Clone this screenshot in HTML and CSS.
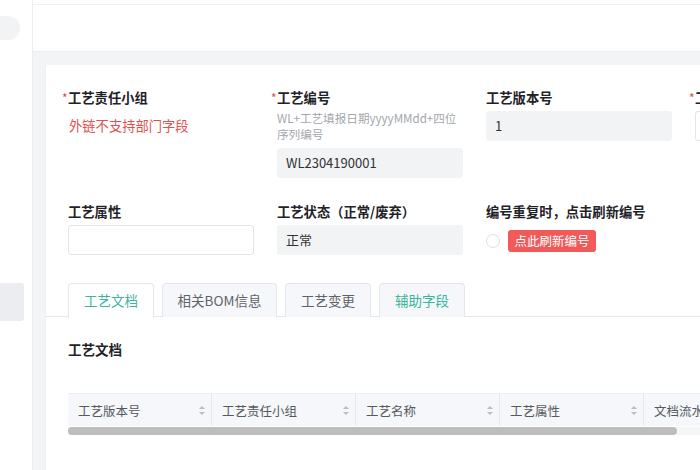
FILE: index.html
```html
<!DOCTYPE html>
<html lang="zh">
<head>
<meta charset="utf-8">
<link rel="stylesheet" href="styles.css">
</head>
<body>
<div class="app">
  <aside class="sidebar">
    <div class="side-pill"></div>
    <div class="side-active"></div>
  </aside>
  <main class="main">
    <header class="topbar"></header>
    <section class="content">
      <div class="card">
        <div class="form-grid">
          <div class="field">
            <div class="label req">工艺责任小组</div>
            <div class="warn">外链不支持部门字段</div>
          </div>
          <div class="field">
            <div class="label req">工艺编号</div>
            <div class="hint">WL+工艺填报日期yyyyMMdd+四位序列编号</div>
            <div class="input disabled">WL2304190001</div>
          </div>
          <div class="field">
            <div class="label">工艺版本号</div>
            <div class="input disabled">1</div>
          </div>
          <div class="field">
            <div class="label req">工艺名称</div>
            <div class="input"></div>
          </div>

          <div class="field">
            <div class="label">工艺属性</div>
            <div class="input"></div>
          </div>
          <div class="field">
            <div class="label">工艺状态（正常/废弃）</div>
            <div class="input disabled">正常</div>
          </div>
          <div class="field">
            <div class="label">编号重复时，点击刷新编号</div>
            <div class="refresh">
              <span class="radio"></span>
              <span class="btn-red">点此刷新编号</span>
            </div>
          </div>
          <div class="field"></div>
        </div>

        <div class="tabs">
          <div class="tab active">工艺文档</div>
          <div class="tab wide">相关BOM信息</div>
          <div class="tab">工艺变更</div>
          <div class="tab teal">辅助字段</div>
        </div>

        <h3 class="section-title">工艺文档</h3>

        <div class="table">
          <div class="thead">
            <div class="th"><span>工艺版本号</span><i class="sort"></i></div>
            <div class="th"><span>工艺责任小组</span><i class="sort"></i></div>
            <div class="th"><span>工艺名称</span><i class="sort"></i></div>
            <div class="th"><span>工艺属性</span><i class="sort"></i></div>
            <div class="th"><span>文档流水号</span><i class="sort"></i></div>
          </div>
          <div class="scroll"><div class="thumb"></div></div>
        </div>
      </div>
    </section>
  </main>
</div>
</body>
</html>
```

FILE: styles.css
```css
* { box-sizing: border-box; margin: 0; padding: 0; }
html, body {
  width: 700px;
  height: 470px;
  overflow: hidden;
  background: #fff;
  font-family: "Noto Sans CJK SC", "Noto Sans", sans-serif;
  color: #303133;
}
.app {
  display: flex;
  height: 470px;
}
.sidebar {
  width: 33px;
  flex: none;
  border-right: 1px solid #eceef1;
  padding-top: 16px;
  display: flex;
  flex-direction: column;
}
.side-pill {
  width: 20px;
  height: 24px;
  background: #f2f3f5;
  border-radius: 0 12px 12px 0;
}
.side-active {
  margin-top: 243px;
  width: 24px;
  height: 38px;
  background: #ebedf1;
  border-radius: 0 3px 3px 0;
}
.main {
  flex: 1;
  min-width: 0;
  display: flex;
  flex-direction: column;
}
.topbar {
  height: 48px;
  flex: none;
  background: #fff;
  border-top: 1px solid #eef0f2;
  margin-top: 4px;
  border-bottom: 1px solid #eceef1;
}
.content {
  flex: 1;
  background: #f3f4f6;
  padding: 13px 0 0 12px;
}
.card {
  background: #fff;
  height: 100%;
  width: 720px;
  padding-top: 23px;
  border-left: 1px solid #eef0f3;
}
.form-grid {
  display: grid;
  grid-template-columns: repeat(4, 186px);
  column-gap: 23px;
  row-gap: 24px;
  padding-left: 22px;
}
.field { display: flex; flex-direction: column; }
.label {
  font-size: 13.3px;
  font-weight: 700;
  line-height: 20px;
  color: #1f2329;
  white-space: nowrap;
}
.label.req::before {
  content: "*";
  color: #e5484d;
  font-weight: 400;
  font-size: 12px;
  margin-left: -6px;
  display: inline-block;
  width: 6px;
}
.warn {
  margin-top: 8px;
  font-size: 13.3px;
  line-height: 20px;
  color: #e0504f;
  padding-left: 1px;
}
.hint {
  margin-top: 2px;
  font-size: 11.6px;
  line-height: 16px;
  color: #a3a6ad;
  margin-bottom: 6px;
}
.input {
  margin-top: 3px;
  height: 30px;
  border: 1px solid #e3e5e9;
  border-radius: 3px;
  background: #fff;
  font-size: 13px;
  line-height: 28px;
  padding-left: 8px;
  color: #303133;
}
.hint + .input { margin-top: 0; }
.input.disabled {
  background: #f2f3f5;
  border-color: #f2f3f5;
}
.refresh {
  margin-top: 8px;
  display: flex;
  align-items: center;
  gap: 8px;
}
.radio {
  width: 14px;
  height: 14px;
  border: 1px solid #dcdfe6;
  border-radius: 50%;
  background: #fff;
}
.btn-red {
  width: 88px;
  height: 22px;
  background: #f25a5a;
  color: #fff;
  border-radius: 3px;
  font-size: 12.5px;
  line-height: 22px;
  text-align: center;
}
.tabs {
  margin-top: 28px;
  display: flex;
  gap: 8px;
  padding-left: 22px;
  border-bottom: 1px solid #e4e7ed;
  height: 34px;
}
.tab {
  width: 86px;
  height: 34px;
  border: 1px solid #e4e7ed;
  border-bottom: none;
  border-radius: 4px 4px 0 0;
  background: #f5f7fa;
  font-size: 13.5px;
  line-height: 33px;
  text-align: center;
  color: #5f6368;
}
.tab.wide { width: 115px; }
.tab.active {
  background: #fff;
  color: #3bb4a0;
  height: 35px;
}
.tab.teal { color: #3bb4a0; }
.section-title {
  margin-top: 22px;
  padding-left: 22px;
  font-size: 13.5px;
  font-weight: 700;
  line-height: 20px;
  color: #1f2329;
}
.table {
  margin: 34px 0 0 22px;
}
.thead {
  display: flex;
  height: 33px;
  background: #f5f7fa;
  border-top: 1px solid #ebeef5;
}
.th {
  width: 144px;
  flex: none;
  display: flex;
  align-items: center;
  justify-content: space-between;
  padding: 0 6px 0 10px;
  border-right: 1px solid #e6e9ef;
  font-size: 12.5px;
  color: #555a61;
}
.sort {
  width: 6px;
  height: 9px;
  position: relative;
  display: inline-block;
}
.sort::before, .sort::after {
  content: "";
  position: absolute;
  left: 0;
  border-left: 3px solid transparent;
  border-right: 3px solid transparent;
}
.sort::before { top: 0; border-bottom: 3.5px solid #b8bcc4; }
.sort::after { bottom: 0; border-top: 3.5px solid #b8bcc4; }
.scroll {
  margin-top: 1px;
  height: 8px;
  background: #f5f6f8;
  width: 640px;
}
.thumb {
  width: 609px;
  height: 8px;
  background: #bdbdbd;
  border-radius: 4px;
}
```
